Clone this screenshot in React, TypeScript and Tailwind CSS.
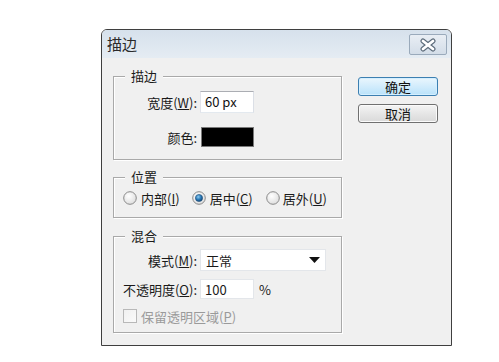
const font = { fontFamily: '"Noto Sans CJK SC", "Noto Sans", sans-serif' };

function Group({
  label,
  className,
  children,
}: {
  label: string;
  className: string;
  children: React.ReactNode;
}) {
  return (
    <div
      className={`relative border border-[#a9a9a9] shadow-[inset_1px_1px_0_#ffffff,1px_1px_0_#ffffff] ${className}`}
    >
      <span className="absolute left-[11px] top-[-9px] bg-[#f0f0f0] px-[6px] text-[13px] leading-[16px] text-[#1a1a1a]">
        {label}
      </span>
      {children}
    </div>
  );
}

function Radio({ checked }: { checked?: boolean }) {
  return (
    <svg width="14" height="14" viewBox="0 0 14 14">
      <defs>
        <radialGradient id="rOff" cx="0.4" cy="0.35" r="0.7">
          <stop offset="0" stopColor="#ffffff" />
          <stop offset="1" stopColor="#dcdcdc" />
        </radialGradient>
        <radialGradient id="rOn" cx="0.4" cy="0.35" r="0.7">
          <stop offset="0" stopColor="#8ecbf0" />
          <stop offset="0.5" stopColor="#2d7dbb" />
          <stop offset="1" stopColor="#0f3f6e" />
        </radialGradient>
      </defs>
      <circle cx="7" cy="7" r="6.3" fill="url(#rOff)" stroke="#8a8a8a" strokeWidth="1" />
      {checked && <circle cx="7" cy="7" r="3.6" fill="url(#rOn)" stroke="#1e4f7a" strokeWidth="0.6" />}
    </svg>
  );
}

function Button({ label, primary }: { label: string; primary?: boolean }) {
  return (
    <div
      className={`flex h-[19px] w-[80px] items-center justify-center rounded-[3px] border text-[13px] leading-none text-[#111] ${
        primary
          ? "border-[#3c7fb1] bg-gradient-to-b from-[#eaf6fd] to-[#b9e2fa] shadow-[inset_0_0_0_1px_#d4efff]"
          : "border-[#707070] bg-gradient-to-b from-[#f4f4f4] to-[#d9d9d9] shadow-[inset_0_0_0_1px_#fbfbfb]"
      }`}
    >
      {label}
    </div>
  );
}

export default function App() {
  return (
    <div className="h-[362px] w-[499px] overflow-hidden bg-white pt-[29px]" style={font}>
      <div className="ml-[101px] flex h-[317px] w-[351px] flex-col overflow-hidden rounded-t-[6px] border border-[#3f3f3f]">
        {/* title bar */}
        <div className="flex h-[28px] shrink-0 items-start justify-between bg-gradient-to-b from-[#d6e1ec] to-[#e5ecf3] pl-[5px] pr-[4px]">
          <span className="mt-[5px] text-[15px] leading-[18px] text-[#2a2a2a]">描边</span>
          <div className="mt-[4px] flex h-[21px] w-[38px] items-center justify-center rounded-[2px] border border-[#9aaabb] bg-gradient-to-b from-[#e9eef4] to-[#d3dde8]">
            <svg width="18" height="14" viewBox="0 0 18 14">
              <path d="M4 3 L14 11 M14 3 L4 11" stroke="#5c6b7a" strokeWidth="5" strokeLinecap="round" />
              <path d="M4 3 L14 11 M14 3 L4 11" stroke="#ffffff" strokeWidth="2.8" strokeLinecap="round" />
            </svg>
          </div>
        </div>

        {/* body */}
        <div className="flex flex-1 gap-[16px] bg-[#f0f0f0] pl-[11px] pt-[18px]">
          <div className="flex w-[229px] flex-col">
            <Group label="描边" className="h-[84px]">
              <div className="flex flex-col pt-[14px]">
                <div className="flex items-center">
                  <span className="w-[83px] text-right text-[13px] leading-none text-[#1a1a1a]">
                    宽度(<u>W</u>):
                  </span>
                  <div className="ml-[3px] flex h-[22px] w-[54px] items-center border border-[#abadb3] border-b-[#e3e9ef] border-l-[#e2e3ea] border-r-[#dbdfe6] bg-white pl-[4px] text-[13px] text-[#111]">
                    60 px
                  </div>
                </div>
                <div className="mt-[14px] flex items-center">
                  <span className="w-[83px] text-right text-[13px] leading-none text-[#1a1a1a]">颜色:</span>
                  <div className="ml-[4px] h-[20px] w-[53px] border border-[#7a7a7a] bg-black" />
                </div>
              </div>
            </Group>

            <Group label="位置" className="mt-[17px] h-[41px]">
              <div className="flex items-center pl-[9px] pt-[13px] text-[13px] leading-none text-[#1a1a1a]">
                <Radio />
                <span className="ml-[4px]">
                  内部(<u>I</u>)
                </span>
                <span className="ml-[12px]">
                  <Radio checked />
                </span>
                <span className="ml-[4px]">
                  居中(<u>C</u>)
                </span>
                <span className="ml-[13px]">
                  <Radio />
                </span>
                <span className="ml-[3px]">
                  居外(<u>U</u>)
                </span>
              </div>
            </Group>

            <Group label="混合" className="mt-[18px] h-[97px]">
              <div className="flex flex-col pt-[12px] text-[13px] leading-none text-[#1a1a1a]">
                <div className="flex items-center">
                  <span className="w-[83px] text-right">
                    模式(<u>M</u>):
                  </span>
                  <div className="ml-[3px] flex h-[22px] w-[126px] items-center justify-between border border-[#e3e6ea] bg-white pl-[5px] pr-[5px]">
                    <span>正常</span>
                    <svg width="11" height="6" viewBox="0 0 11 6">
                      <path d="M0 0 H11 L5.5 6 Z" fill="#111" />
                    </svg>
                  </div>
                </div>
                <div className="mt-[8px] flex items-center">
                  <span className="w-[83px] text-right">
                    不透明度(<u>O</u>):
                  </span>
                  <div className="ml-[3px] flex h-[20px] w-[54px] items-center border border-[#e3e6ea] bg-white pl-[4px]">
                    100
                  </div>
                  <span className="ml-[5px]">%</span>
                </div>
                <div className="mt-[10px] flex items-center pl-[9px] text-[#9a9a9a]">
                  <div className="h-[14px] w-[14px] border border-[#b8b8b8] bg-gradient-to-br from-[#f0f0f0] to-[#fafafa]" />
                  <span className="ml-[4px]">
                    保留透明区域(<u>P</u>)
                  </span>
                </div>
              </div>
            </Group>
          </div>

          <div className="flex flex-col gap-[8px] pt-[1px]">
            <Button label="确定" primary />
            <Button label="取消" />
          </div>
        </div>
      </div>
    </div>
  );
}
